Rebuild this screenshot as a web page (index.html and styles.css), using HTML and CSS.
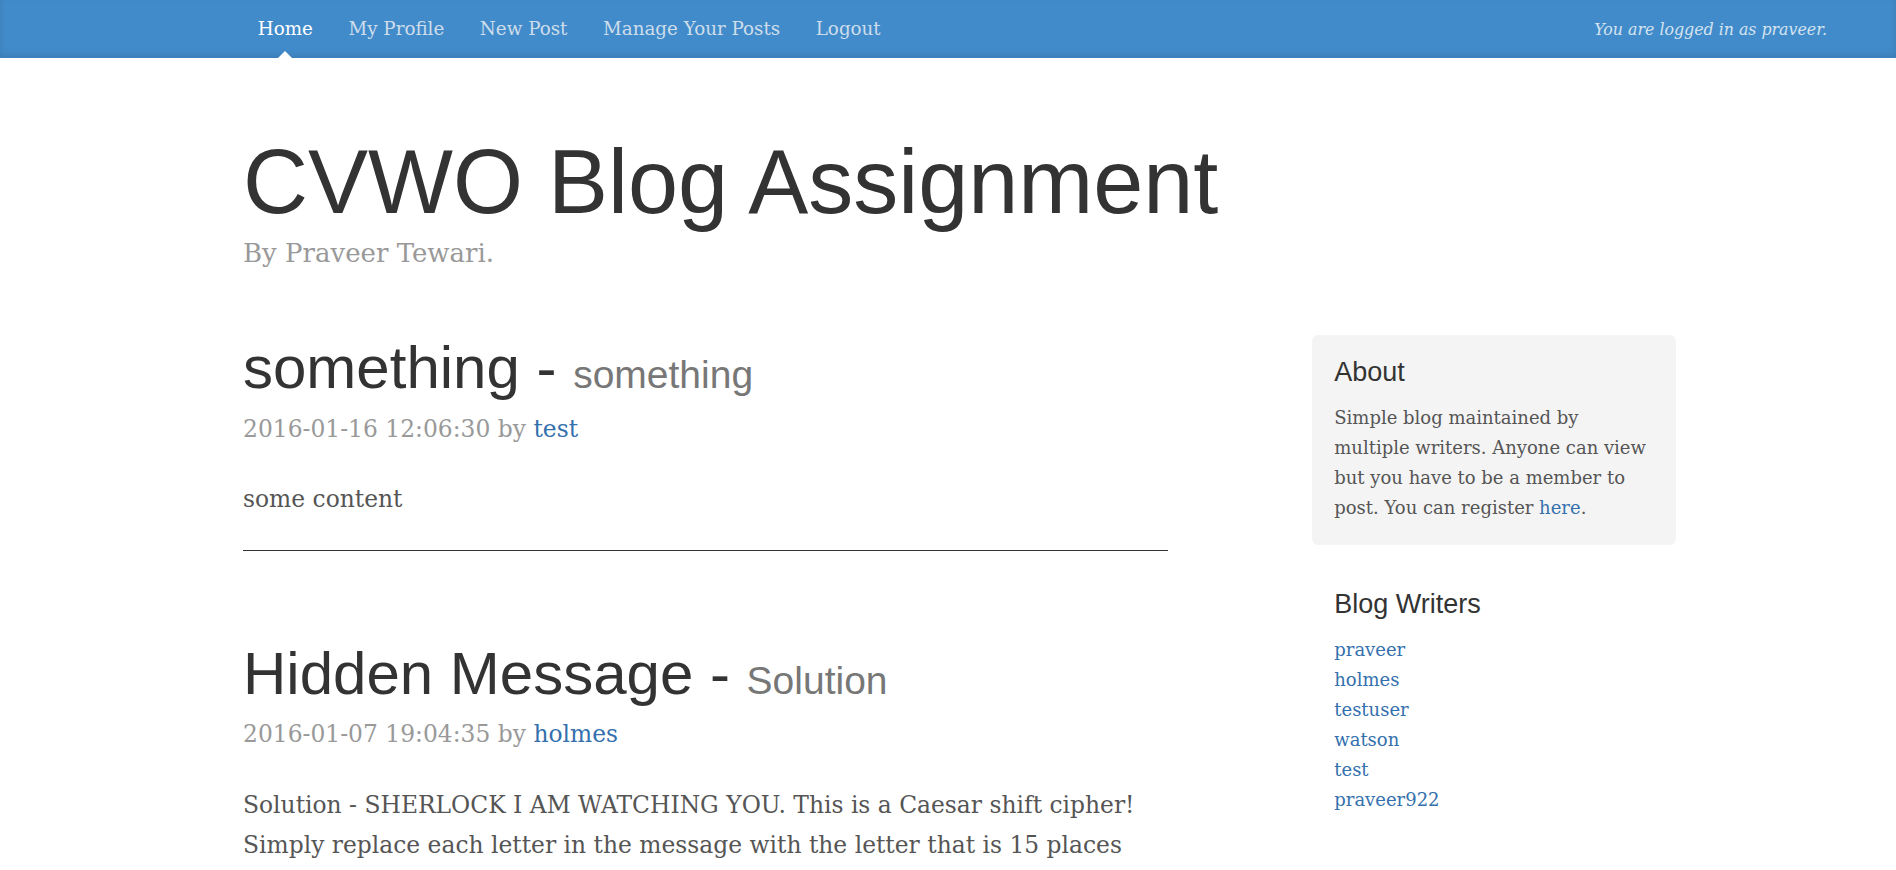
FILE: index.html
```html
<!DOCTYPE html>
<html lang="en">
<head>
<meta charset="utf-8">
<title>CVWO Blog Assignment</title>
<link rel="stylesheet" href="styles.css">
</head>
<body>
<header class="masthead">
  <div class="masthead-inner">
    <nav class="blog-nav">
      <a class="nav-item active" href="#">Home</a>
      <a class="nav-item" href="#">My Profile</a>
      <a class="nav-item" href="#">New Post</a>
      <a class="nav-item" href="#">Manage Your Posts</a>
      <a class="nav-item" href="#">Logout</a>
    </nav>
    <span class="login-note">You are logged in as praveer.</span>
  </div>
</header>

<div class="container">
  <div class="blog-header">
    <h1 class="blog-title">CVWO Blog Assignment</h1>
    <p class="blog-description">By Praveer Tewari.</p>
  </div>

  <div class="row">
    <main class="blog-main">
      <article class="blog-post">
        <h2 class="post-title">something - <small>something</small></h2>
        <p class="post-meta">2016-01-16 12:06:30 by <a href="#">test</a></p>
        <p>some content</p>
        <hr>
      </article>
      <article class="blog-post">
        <h2 class="post-title">Hidden Message - <small>Solution</small></h2>
        <p class="post-meta">2016-01-07 19:04:35 by <a href="#">holmes</a></p>
        <p>Solution - SHERLOCK I AM WATCHING YOU. This is a Caesar shift cipher! Simply replace each letter in the message with the letter that is 15 places before it in the alphabet.</p>
        <hr>
      </article>
    </main>

    <aside class="blog-sidebar">
      <div class="sidebar-module sidebar-module-inset">
        <h4 class="module-title">About</h4>
        <p>Simple blog maintained by multiple writers. Anyone can view but you have to be a member to post. You can register <a href="#">here</a>.</p>
      </div>
      <div class="sidebar-module">
        <h4 class="module-title">Blog Writers</h4>
        <ol class="writer-list">
          <li><a href="#">praveer</a></li>
          <li><a href="#">holmes</a></li>
          <li><a href="#">testuser</a></li>
          <li><a href="#">watson</a></li>
          <li><a href="#">test</a></li>
          <li><a href="#">praveer922</a></li>
        </ol>
      </div>
    </aside>
  </div>
</div>
</body>
</html>
```

FILE: styles.css
```css
* {
  box-sizing: border-box;
}

html, body {
  margin: 0;
  padding: 0;
  background: #fff;
}

body {
  font-family: "DejaVu Serif", "Liberation Serif", serif;
  font-size: 18px;
  line-height: 30px;
  color: #555;
}

a {
  color: #3470ad;
  text-decoration: none;
}

/* Masthead */
.masthead {
  background-color: #428bca;
  box-shadow: inset 0 -3px 7px rgba(0, 0, 0, 0.1);
  height: 58px;
}

.masthead-inner {
  display: flex;
  justify-content: space-between;
  align-items: baseline;
  padding-left: 240px;
  padding-right: 69px;
}

.blog-nav {
  display: flex;
}

.nav-item {
  position: relative;
  display: inline-block;
  padding: 14px 17.8px;
  font-size: 18.3px;
  line-height: 30px;
  color: #cdddeb;
}

.nav-item.active {
  color: #fff;
}

.nav-item.active::after {
  content: "";
  position: absolute;
  bottom: 0;
  left: 50%;
  margin-left: -7.5px;
  width: 0;
  height: 0;
  border-left: 7.5px solid transparent;
  border-right: 7.5px solid transparent;
  border-bottom: 7.5px solid #fff;
}

.login-note {
  font-style: italic;
  font-size: 15.8px;
  color: #d4e3f0;
}

/* Layout */
.container {
  width: 1455px;
  margin: 0 auto;
  padding: 0 22.5px;
}

.blog-header {
  padding-top: 30px;
  padding-bottom: 45.5px;
}

.blog-title {
  margin: 45px 0 0;
  font-family: "Liberation Sans", Arial, sans-serif;
  font-size: 90px;
  line-height: 99px;
  font-weight: normal;
  color: #333;
}

.blog-description {
  margin: 0 0 15px;
  font-size: 26px;
  line-height: 42.86px;
  color: #999;
}

.row {
  display: flex;
  align-items: flex-start;
  margin: 0 -22.5px;
}

.blog-main {
  flex: 0 0 970px;
  padding: 0 22.5px;
  font-size: 23.4px;
  line-height: 40.5px;
}

.blog-post {
  margin-bottom: 90px;
}

.post-title {
  margin: 0 0 7.5px;
  font-family: "Liberation Sans", Arial, sans-serif;
  font-size: 60px;
  line-height: 66px;
  font-weight: normal;
  color: #333;
}

.post-title small {
  font-size: 65%;
  line-height: 1;
  color: #777;
}

.blog-main p {
  margin: 0 0 15px;
}

.blog-main .post-meta {
  margin-bottom: 30px;
  color: #999;
}

.blog-main hr {
  margin: 30px 0;
  border: 0;
  border-top: 1px solid #333;
  height: 0;
}

/* Sidebar */
.blog-sidebar {
  flex: 0 0 363.75px;
  margin-left: 121.25px;
  padding: 0 22.5px;
}

.sidebar-module {
  padding: 22.5px;
  margin: 0 -22.5px 22.5px;
}

.sidebar-module-inset {
  background-color: #f4f4f4;
  border-radius: 6px;
}

.sidebar-module-inset p {
  margin: 0;
}

.module-title {
  margin: 0 0 15px;
  font-family: "Liberation Sans", Arial, sans-serif;
  font-size: 27px;
  line-height: 29.7px;
  font-weight: normal;
  color: #333;
}

.writer-list {
  list-style: none;
  margin: 0;
  padding: 0;
}
```
